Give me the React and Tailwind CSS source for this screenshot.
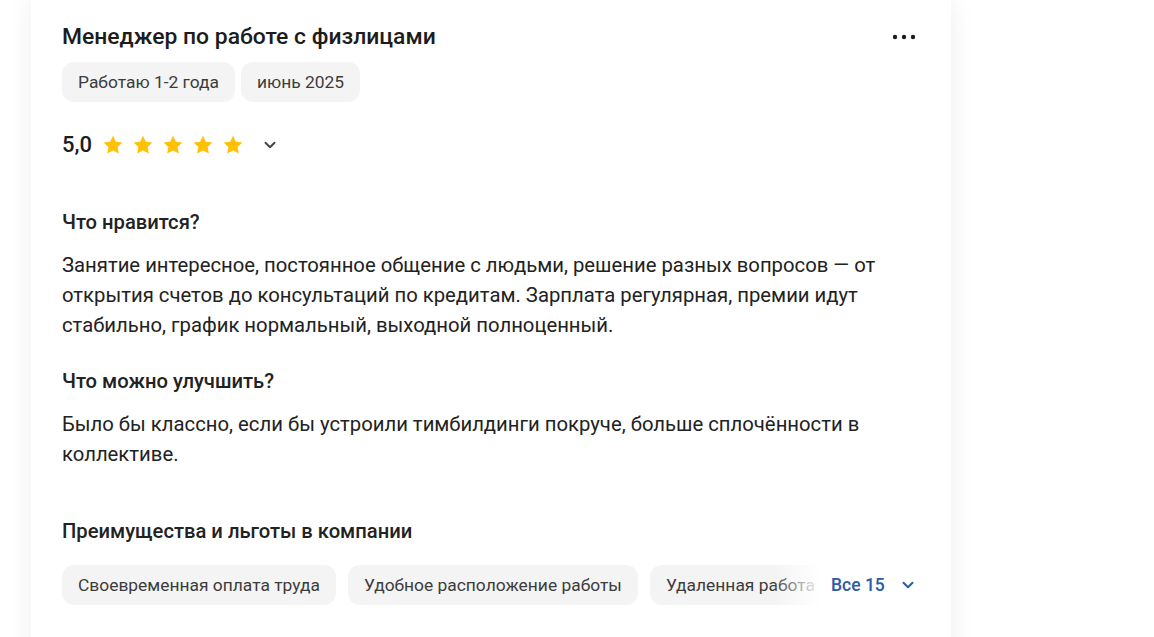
const Star = () => (
  <svg className="w-[22px] h-[22px]" viewBox="0 0 24 24" fill="#ffc107">
    <path d="M12 1.8l3.1 6.6 7.2.9-5.3 5 1.4 7.1L12 17.9l-6.4 3.5 1.4-7.1-5.3-5 7.2-.9z" />
  </svg>
);

const Chevron = ({ className }) => (
  <svg className={className} viewBox="0 0 24 24" fill="none" stroke="currentColor" strokeWidth={2.6} strokeLinecap="round" strokeLinejoin="round">
    <path d="M6 9l6 6 6-6" />
  </svg>
);

const Chip = ({ children }) => (
  <div className="shrink-0 rounded-xl bg-[#f4f4f4] px-4 py-2 text-[17.4px] leading-6 text-[#3c3c3c] whitespace-nowrap">
    {children}
  </div>
);

const benefits = [
  "Своевременная оплата труда",
  "Удобное расположение работы",
  "Удаленная работа",
  "Корпоративное обучение",
];

export default function App() {
  return (
    <div className="min-h-[637px] bg-white overflow-hidden pl-[31px] font-['Roboto',sans-serif]">
      <div className="w-[920px] h-[680px] bg-white shadow-[0_0_24px_rgba(0,0,0,0.07)] pt-[23px] px-[31px] text-[#222]">
        {/* Заголовок */}
        <div className="flex items-center justify-between">
          <h2 className="text-[22.9px] leading-7 font-medium text-[#1c1c1c]">
            Менеджер по работе с физлицами
          </h2>
          <svg className="w-6 h-6 mr-[4px]" viewBox="0 0 24 24" fill="#1c1c1c">
            <circle cx="3" cy="12" r="2.2" />
            <circle cx="12" cy="12" r="2.2" />
            <circle cx="21" cy="12" r="2.2" />
          </svg>
        </div>

        <div className="mt-[11px] flex gap-[6px]">
          <Chip>Работаю 1-2 года</Chip>
          <Chip>июнь 2025</Chip>
        </div>

        {/* Оценка */}
        <div className="mt-[29px] flex items-center">
          <span className="text-[22px] leading-7 font-medium text-[#1c1c1c]">5,0</span>
          <div className="ml-[10px] flex gap-2">
            <Star />
            <Star />
            <Star />
            <Star />
            <Star />
          </div>
          <Chevron className="ml-[17px] w-[18px] h-[18px] text-[#444]" />
        </div>

        <h3 className="mt-[51px] text-[20.2px] leading-6 font-medium">Что нравится?</h3>
        <p className="mt-4 text-[20.3px] leading-[30px]">
          Занятие интересное, постоянное общение с людьми, решение разных вопросов — от
          открытия счетов до консультаций по кредитам. Зарплата регулярная, премии идут
          стабильно, график нормальный, выходной полноценный.
        </p>

        <h3 className="mt-[29px] text-[20.2px] leading-6 font-medium">Что можно улучшить?</h3>
        <p className="mt-4 text-[20.3px] leading-[30px]">
          Было бы классно, если бы устроили тимбилдинги покруче, больше сплочённости в
          коллективе.
        </p>

        <h3 className="mt-[50px] text-[20.2px] leading-6 font-medium">Преимущества и льготы в компании</h3>
        <div className="mt-[22px] flex items-center">
          <div className="relative w-[759px] overflow-hidden flex gap-3">
            {benefits.map((b) => (
              <Chip key={b}>{b}</Chip>
            ))}
            <div className="absolute right-0 top-0 h-full w-[48px] bg-gradient-to-r from-white/0 to-white" />
          </div>
          <button className="ml-[10px] flex items-center gap-[14px] text-[17.5px] font-medium text-[#2a5ba6]">
            Все 15
            <Chevron className="w-[18px] h-[18px]" />
          </button>
        </div>
      </div>
    </div>
  );
}
